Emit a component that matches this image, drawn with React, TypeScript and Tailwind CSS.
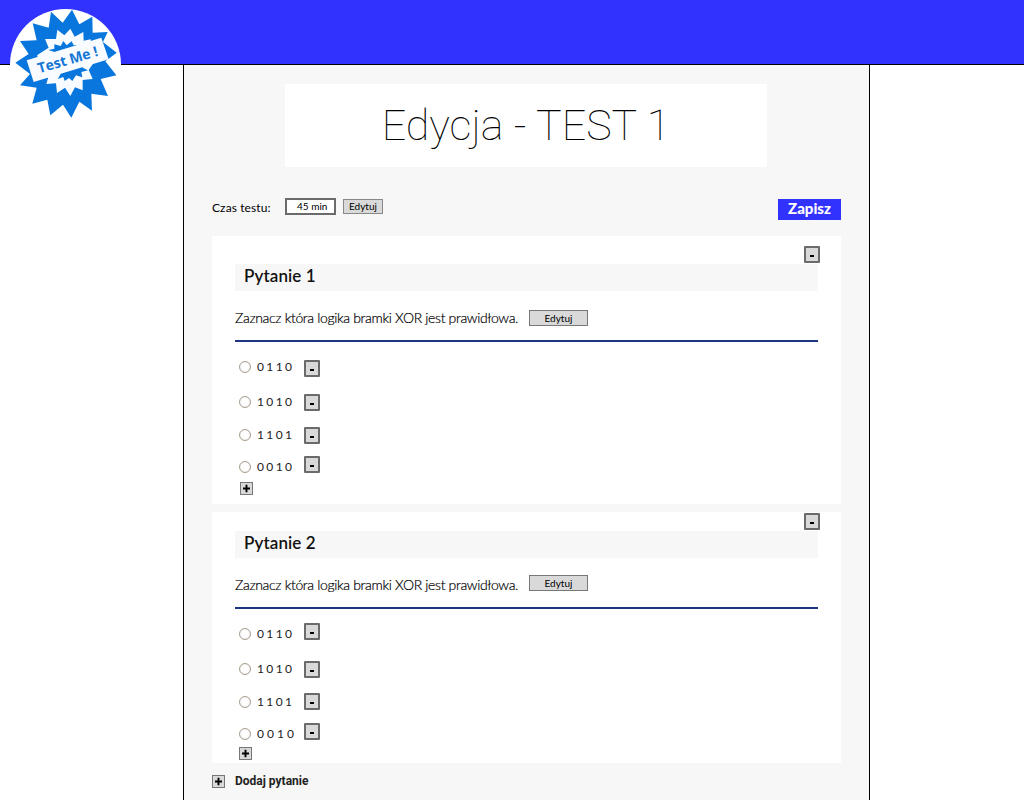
type Row = { label: string; button: number; labelTop: number; spacing?: string };
type Question = { title: string; gap: string; editTop: string; rows: Row[]; plus: string };

function Minus() {
  return (
    <button className="h-[17px] w-4 shrink-0 rounded-[1px] border-2 border-[#6b6b6b] bg-[#d9d9d9] flex items-center justify-center">
      <span className="mt-[3px] h-[2px] w-1 bg-black" />
    </button>
  );
}

function Plus() {
  return (
    <button className="h-[13px] w-[13px] shrink-0 border border-[#777] bg-[#d9d9d9] flex items-center justify-center">
      <svg width="9" height="9" viewBox="0 0 9 9"><path d="M1 4.5H8M4.5 0.8V8.2" stroke="#000" strokeWidth="1.9" /></svg>
    </button>
  );
}

function Logo() {
  return (
    <svg className="absolute left-[10px] top-[9px]" width="111" height="112" viewBox="30 27 333 336">
      <circle cx="196.500" cy="193.500" r="166.500" fill="#fff" />
      <polygon fill="#0876dd" points="216,29 238,73 277,50 278,98 323,96 309,126 350,158 316,184 349,226 302,237 324,288 274,281 276,332 238,305 214,353 189,314 151,346 142,299 97,311 110,263 60,256 90,222 46,188 86,162 60,123 110,121 98,70 146,83 153,35 188,68" />
      <polygon fill="#f8fbff" points="211,86 224,110 250,96 251,122 272,118 280,190 266,210 278,237 248,240 248,271 225,262 211,288 195,263 171,279 168,250 139,252 145,232 118,220 112,165 146,143 135,117 168,117 172,89 193,106" />
      <polygon fill="#0876dd" points="190,123 200,136 215,124 221,136 243,134 240,152 148,170 162,155 145,150 163,146 163,133 182,138" />
      <polygon fill="#0876dd" points="166,214 252,186 248,203 264,211 244,216 247,232 228,226 217,243 207,234 194,243 190,231 173,237 182,223 168,221" />
      <polygon fill="#f8fbff" points="80,181 304,113 326,178 101,246" />
      <text x="118" y="220" transform="rotate(-16.500 118 220)" fill="#1476d4" fontFamily="Open Sans, sans-serif" fontWeight="700" fontSize="42" textLength="186" lengthAdjust="spacingAndGlyphs">Test Me !</text>
    </svg>
  );
}

const questions: Question[] = [
  {
    title: "Pytanie 1", gap: "pt-[10px] h-[268px]", editTop: "mt-[19px]", plus: "mt-[7px] ml-[5px]",
    rows: [
      { label: "0110", button: 18, labelTop: 16 },
      { label: "1010", button: 17, labelTop: 18 },
      { label: "1101", button: 16, labelTop: 16 },
      { label: "0010", button: 12, labelTop: 15 },
    ],
  },
  {
    title: "Pytanie 2", gap: "pt-[1px] h-[251px]", editTop: "mt-[17px]", plus: "mt-[5px] ml-[4px]",
    rows: [
      { label: "0110", button: 14, labelTop: 16 },
      { label: "1010", button: 21, labelTop: 18 },
      { label: "1101", button: 15, labelTop: 16 },
      { label: "0010", button: 13, labelTop: 15, spacing: "wide" },
    ],
  },
];

function QuestionCard({ q }: { q: Question }) {
  return (
    <section className={"w-[629px] bg-white pl-[23px] pr-[21px] " + q.gap}>
      <div className="flex h-[18px] justify-end"><div className="relative z-10"><Minus /></div></div>
      <h2 className="h-[27px] w-[583px] bg-[#f7f7f7] pl-[9px] text-[17px] font-semibold leading-[23px] tracking-[0.100px] text-[#111]">
        {q.title}
      </h2>
      <div className="flex h-[49px] w-[583px] items-start">
        <span className="mt-[17px] w-[294px] whitespace-nowrap text-[14px] leading-[20px] font-light tracking-[-0.340px] text-black [-webkit-text-stroke:0.200px_#000]">Zaznacz która logika bramki XOR jest prawidłowa.</span>
        <button className={"flex h-[16px] w-[59px] items-center justify-center border border-[#777] bg-[#d9d9d9] text-[10px] leading-[12px] " + q.editTop}>Edytuj</button>
      </div>
      <div className="h-[2px] w-[583px] bg-[#1f3480]" />
      <div className="flex h-[133px]">
        <div className="flex w-[69px] flex-col pl-[4px]">
          {q.rows.map((r) => (
            <div key={r.label} className="flex h-[17px] shrink-0 items-center" style={{ marginTop: r.labelTop }}>
              <span className="h-3 w-3 rounded-full border-[1.500px] border-[#aaa08f] bg-white shadow-[inset_0_0_1px_#bbb]" />
              <span className={"ml-[6px] text-[12px] leading-[16px] text-[#222] " + (r.spacing ? "tracking-[3px]" : "tracking-[2.400px]")}>{r.label}</span>
            </div>
          ))}
        </div>
        <div className="flex flex-col">
          {q.rows.map((r) => (
            <div key={r.label} className="h-[17px] shrink-0" style={{ marginTop: r.button }}><Minus /></div>
          ))}
        </div>
      </div>
      <div className={"flex " + q.plus}><Plus /></div>
    </section>
  );
}

export default function App() {
  return (
    <div className="relative h-[800px] w-[1024px] overflow-hidden bg-white font-['Lato',sans-serif] text-black">
      <header className="h-[65px] border-b border-black bg-[#3232ff]" />
      <Logo />
      <main className="ml-[183px] h-[735px] w-[687px] border-x border-black bg-[#f7f7f7] pl-[28px] pt-[19px]">
        <h1 className="ml-[73px] flex h-[83px] w-[482px] items-center justify-center bg-white pb-[2px] font-['Roboto',sans-serif] text-[43px] font-thin leading-[50px]">Edycja - TEST 1</h1>
        <div className="flex h-[69px] w-[629px] items-start">
          <span className="mt-[33px] w-[73px] whitespace-nowrap text-[12px] leading-[16px] tracking-[0.100px]">Czas testu:</span>
          <div className="mt-[31px] flex h-[17px] w-[51px] items-center border-2 border-[#6b6b6b] bg-white pb-px pl-[10px] text-[10px] leading-[12px]">45 min</div>
          <button className="ml-[7px] mt-[32px] flex h-[15px] w-[40px] items-center justify-center border border-[#888] bg-[#d9d9d9] pb-px text-[10px] leading-[12px]">Edytuj</button>
          <button className="ml-auto mt-[32px] flex h-[21px] w-[63px] items-center justify-center bg-[#3232ff] pb-[2px] text-[15px] font-black leading-[19px] text-white">Zapisz</button>
        </div>
        <div className="flex flex-col gap-[8px]">
          {questions.map((q) => <QuestionCard key={q.title} q={q} />)}
        </div>
        <div className="mt-[10px] flex items-center">
          <Plus />
          <span className="ml-[10px] font-['Roboto',sans-serif] text-[12px] font-bold leading-[16px] text-[#222]">Dodaj pytanie</span>
        </div>
      </main>
    </div>
  );
}
